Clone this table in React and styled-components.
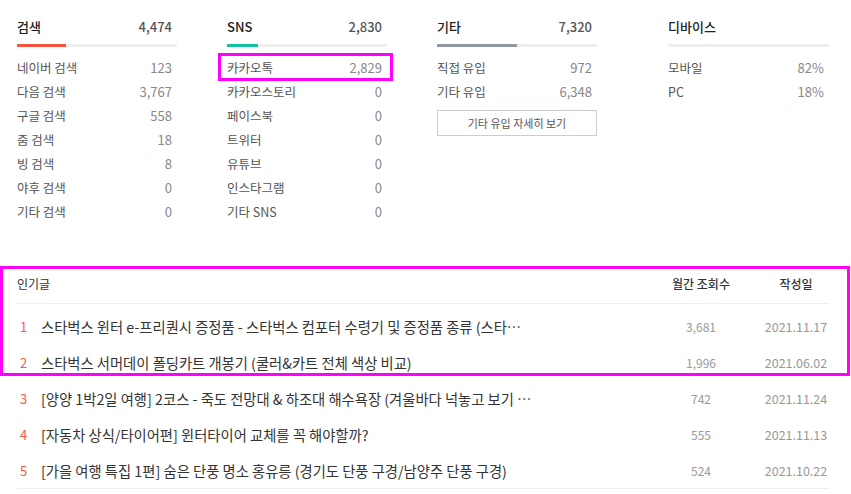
import React from "react";
import styled, { createGlobalStyle } from "styled-components";

const Global = createGlobalStyle`
  html, body { margin: 0; padding: 0; background: #fff; }
  body { font-family: "Noto Sans CJK KR", "Noto Sans", sans-serif; color: #333; }
  * { box-sizing: border-box; }
`;

const Page = styled.div`
  width: 851px;
  padding: 0 22px 0 17px;
`;

const Stats = styled.div`
  display: grid;
  grid-template-columns: 160px 160px 160px 1fr;
  column-gap: 50px;
  padding-top: 16px;
  height: 264px;
`;

const Column = styled.div`
  padding-left: ${(p) => (p.$shift ? "21px" : "0")};
  display: flex;
  flex-direction: column;
`;

const Head = styled.div`
  display: flex;
  justify-content: space-between;
  align-items: center;
  height: 20px;
  padding-right: 5px;
  margin-bottom: 8px;
`;

const HeadTitle = styled.span`
  font-size: 13px;
  font-weight: 500;
  color: #222;
`;

const HeadValue = styled.span`
  font-size: 13px;
  font-weight: 500;
  color: #555;
`;

const Track = styled.div`
  height: 3px;
  background: #eeeeee;
  margin-bottom: 8px;
`;

const Fill = styled.div`
  height: 100%;
  background: ${(p) => p.$color};
`;

const Row = styled.div`
  position: relative;
  display: flex;
  justify-content: space-between;
  align-items: center;
  height: 24px;
  padding-right: 5px;
  ${(p) =>
    p.$marked &&
    `
    &::after {
      content: "";
      position: absolute;
      left: -9px;
      right: -6px;
      top: -2px;
      bottom: -2px;
      border: 3px solid #ff00ff;
    }
  `}
`;

const Label = styled.span`
  font-size: 12.5px;
  color: #555;
`;

const Value = styled.span`
  font-size: 13px;
  color: #888;
`;

const MoreButton = styled.button`
  margin-top: 7px;
  height: 26px;
  width: 160px;
  border: 1px solid #c8cdd8;
  background: #fff;
  font-family: inherit;
  font-size: 11px;
  color: #555;
  padding: 0;
`;

const Table = styled.div`
  position: relative;
`;

const Highlight = styled.div`
  position: absolute;
  left: -17px;
  right: -21px;
  top: 2px;
  height: 110px;
  border: 3px solid #ff00ff;
  pointer-events: none;
`;

const TableHead = styled.div`
  display: grid;
  grid-template-columns: 1fr 112px 66px;
  align-items: center;
  height: 40px;
  border-bottom: 1px solid #eeeeee;
  font-size: 12px;
  color: #333;
`;

const HeadCell = styled.div`
  text-align: ${(p) => p.$align || "left"};
  padding-right: ${(p) => p.$pr || 0}px;
  font-weight: ${(p) => (p.$strong ? 500 : 400)};
`;

const Body = styled.div`
  padding-top: 4px;
  border-bottom: 1px solid #eeeeee;
`;

const PostRow = styled.div`
  display: grid;
  grid-template-columns: 24px minmax(0, 1fr) 112px 66px;
  align-items: center;
  height: 36px;
  font-size: 14.3px;
`;

const Rank = styled.span`
  color: #f55a44;
  font-size: 13px;
  padding-left: 3px;
`;

const Title = styled.span`
  color: #333;
  white-space: nowrap;
  overflow: hidden;
  text-overflow: ellipsis;
  padding-right: 119px;
`;

const Views = styled.span`
  color: #999;
  font-size: 12px;
  text-align: center;
  padding-right: 12px;
`;

const DateCell = styled.span`
  color: #999;
  font-size: 12.5px;
  text-align: center;
`;

const total = 4474 + 2830 + 7320;

const groups = [
  {
    title: "검색",
    value: "4,474",
    pct: (4474 / total) * 100,
    color: "#f5533d",
    rows: [
      ["네이버 검색", "123"],
      ["다음 검색", "3,767"],
      ["구글 검색", "558"],
      ["줌 검색", "18"],
      ["빙 검색", "8"],
      ["야후 검색", "0"],
      ["기타 검색", "0"],
    ],
  },
  {
    title: "SNS",
    value: "2,830",
    pct: (2830 / total) * 100,
    color: "#14c1a1",
    rows: [
      ["카카오톡", "2,829", true],
      ["카카오스토리", "0"],
      ["페이스북", "0"],
      ["트위터", "0"],
      ["유튜브", "0"],
      ["인스타그램", "0"],
      ["기타 SNS", "0"],
    ],
  },
  {
    title: "기타",
    value: "7,320",
    pct: (7320 / total) * 100,
    color: "#8e97a2",
    rows: [
      ["직접 유입", "972"],
      ["기타 유입", "6,348"],
    ],
    button: "기타 유입 자세히 보기",
  },
  {
    title: "디바이스",
    value: "",
    pct: 0,
    color: "#eee",
    shift: true,
    rows: [
      ["모바일", "82%"],
      ["PC", "18%"],
    ],
  },
];

const posts = [
  ["스타벅스 윈터 e-프리퀀시 증정품 - 스타벅스 컴포터 수령기 및 증정품 종류 (스타벅스 윈터 e-프리퀀시)", "3,681", "2021.11.17"],
  ["스타벅스 서머데이 폴딩카트 개봉기 (쿨러&카트 전체 색상 비교)", "1,996", "2021.06.02"],
  ["[양양 1박2일 여행] 2코스 - 죽도 전망대 & 하조대 해수욕장 (겨울바다 넉놓고 보기 좋은 곳)", "742", "2021.11.24"],
  ["[자동차 상식/타이어편] 윈터타이어 교체를 꼭 해야할까?", "555", "2021.11.13"],
  ["[가을 여행 특집 1편] 숨은 단풍 명소 홍유릉 (경기도 단풍 구경/남양주 단풍 구경)", "524", "2021.10.22"],
];

export default function App() {
  return (
    <Page>
      <Global />
      <Stats>
        {groups.map((g) => (
          <Column key={g.title} $shift={g.shift}>
            <Head>
              <HeadTitle>{g.title}</HeadTitle>
              <HeadValue>{g.value}</HeadValue>
            </Head>
            <Track>
              <Fill $color={g.color} style={{ width: `${g.pct}%` }} />
            </Track>
            {g.rows.map(([label, value, marked]) => (
              <Row key={label} $marked={marked}>
                <Label>{label}</Label>
                <Value>{value}</Value>
              </Row>
            ))}
            {g.button && <MoreButton>{g.button}</MoreButton>}
          </Column>
        ))}
      </Stats>
      <Table>
        <Highlight />
        <TableHead>
          <HeadCell>인기글</HeadCell>
          <HeadCell $align="center" $pr={12} $strong>
            월간 조회수
          </HeadCell>
          <HeadCell $align="center" $strong>
            작성일
          </HeadCell>
        </TableHead>
        <Body>
          {posts.map(([title, views, date], i) => (
            <PostRow key={i}>
              <Rank>{i + 1}</Rank>
              <Title>{title}</Title>
              <Views>{views}</Views>
              <DateCell>{date}</DateCell>
            </PostRow>
          ))}
        </Body>
      </Table>
    </Page>
  );
}
